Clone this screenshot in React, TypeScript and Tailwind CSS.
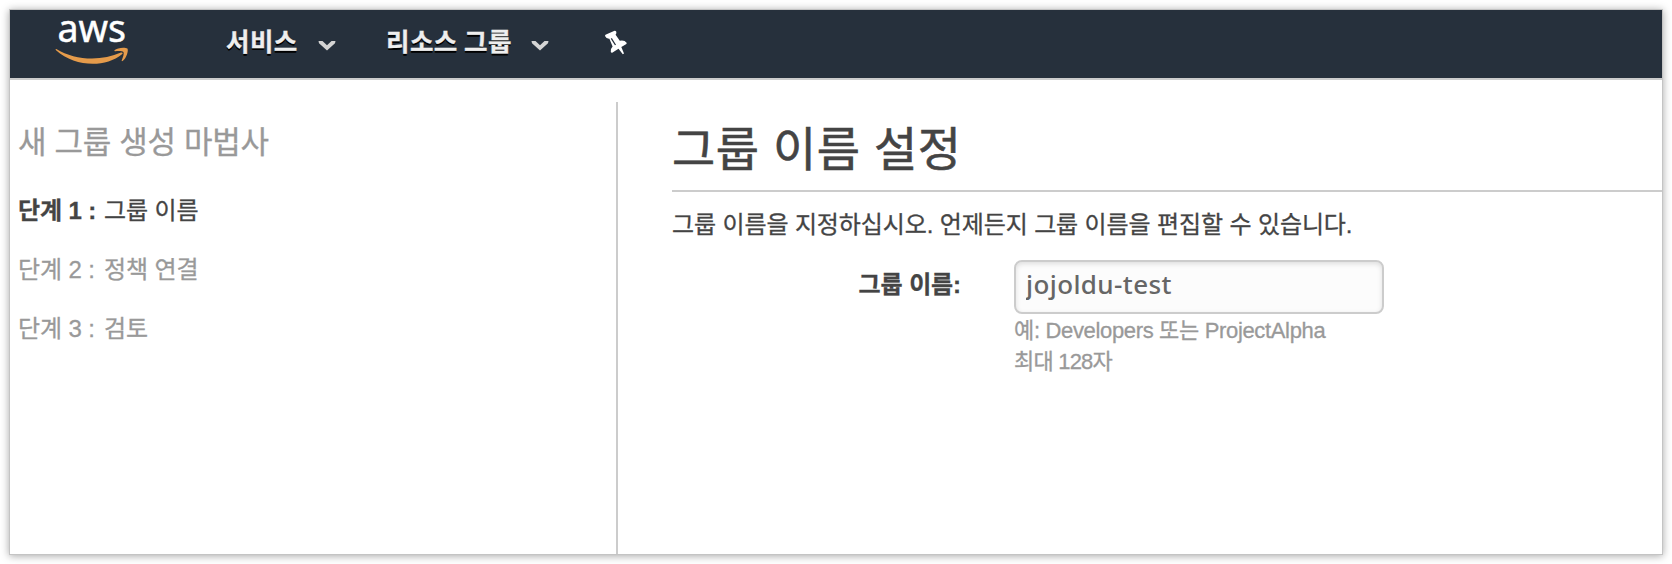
import type { ReactNode } from 'react';

const SANS = "font-['Liberation_Sans','Noto_Sans_CJK_KR',sans-serif]";
const KOREAN = "font-['Noto_Sans_CJK_KR',sans-serif]";

function AwsLogo() {
  return (
    <svg className="block h-[48px] w-[76px] overflow-visible" viewBox="0 0 76 48" role="img" aria-label="aws">
      <text
        x="2.5"
        y="26.3"
        textLength="68.5"
        lengthAdjust="spacingAndGlyphs"
        fontSize="38.5"
        fill="#fff"
        stroke="#fff"
        strokeWidth="0.5"
        className="font-['Noto_Sans',sans-serif]"
      >
        aws
      </text>
      <path d="M1.3 33 C20 44.5 46 45.5 66 36.6 C67.4 36 68.3 37.2 67 38.2 C50 52 20 51 1 34.2 C0.4 33.6 0.6 32.7 1.3 33 Z" fill="#e59b4b" />
      <path d="M59.5 34.3 C62 31.5 70 31 72.4 32.4 C73.8 34.5 71.6 42 67.6 45 C66.9 45.4 66.5 45 66.7 44.4 C68 41.5 69.3 37.5 68.4 36 C67.3 34.7 63.2 34.8 60.2 35.2 C59.4 35.3 59 34.9 59.5 34.3 Z" fill="#e59b4b" />
    </svg>
  );
}

function Caret() {
  return (
    <svg className="block h-[12px] w-[18px]" viewBox="0 0 18 12" aria-hidden="true">
      <path d="M0.500 1 L4.500 1 L9 5.200 L13.500 1 L17.500 1 L17 3.200 L9 10.600 L1 3.200 Z" fill="#d4d4d4" />
    </svg>
  );
}

function Pin() {
  return (
    <svg className="block h-[26px] w-[24px]" viewBox="0 0 24 26" aria-hidden="true">
      <path
        d="M1 6 Q1 5 2 4.600 L10 0.900 Q11.600 0.400 12.300 1.700 Q12.800 3.300 11.600 4.700 L15.800 10.800 Q20.500 9.900 22.600 12.700 Q22.900 13.700 22 14.200 L17.300 16.900 L20 23.500 L18.800 24.300 L14.500 18.700 L8.600 22.600 Q7.300 23.200 6.800 22 Q6.200 19 8.600 16.600 L5.400 8.700 Q2.300 8.900 1 6 Z"
        fill="#fff"
      />
      <path d="M7.300 8.300 L11.500 15" stroke="#26303c" strokeWidth="1.300" />
    </svg>
  );
}

function MenuLabel({ children }: { children: ReactNode }) {
  return (
    <span className={`${KOREAN} text-[25.5px] leading-[36px] font-bold tracking-[0.45px] whitespace-nowrap text-[#eee] [-webkit-text-stroke:0.3px_currentColor] [text-shadow:0_2px_0_#000]`}>
      {children}
    </span>
  );
}

function Step({ label, name, active = false }: { label: string; name: string; active?: boolean }) {
  return (
    <li className={`flex h-[36px] items-center whitespace-nowrap ${active ? 'text-[#444]' : 'text-[#999]'}`}>
      <span className={`w-[86px] ${active ? 'font-bold' : ''}`}>{label}</span>
      <span>{name}</span>
    </li>
  );
}

export default function App() {
  return (
    <div className="h-[564px] w-[1672px] bg-white p-[10px]">
      <div className={`${SANS} flex h-[544px] w-[1652px] flex-col bg-white shadow-[0_0_0_1px_#c4c4c4,0_1px_8px_1px_rgba(0,0,0,0.35)]`}>
        <header className="flex h-[70px] shrink-0 border-b-2 border-[#ccc] bg-[#26303c]">
          <div className="ml-[45px] pt-[6px]">
            <AwsLogo />
          </div>
          <nav className="ml-[95px] flex h-[60px] items-center">
            <span className="flex w-[92px]"><MenuLabel>서비스</MenuLabel></span>
            <span className="mt-[11px]"><Caret /></span>
            <span className="ml-[50px] flex w-[145px]"><MenuLabel>리소스 그룹</MenuLabel></span>
            <span className="mt-[11px]"><Caret /></span>
            <span className="mt-[6px] ml-[55px]"><Pin /></span>
          </nav>
        </header>

        <div className="flex flex-1 pt-[22px]">
          <aside className="w-[606px] shrink-0 pt-[19px] pl-[8px] [-webkit-text-stroke:0.3px_currentColor]">
            <h2 className="h-[44px] text-[31px] leading-[44px] tracking-[-0.3px] whitespace-nowrap text-[#999]">새 그룹 생성 마법사</h2>
            <ol className="mt-[28px] flex flex-col gap-[23px] text-[24px] tracking-[-0.1px]">
              <Step active label="단계 1 :" name="그룹 이름" />
              <Step label="단계 2 :" name="정책 연결" />
              <Step label="단계 3 :" name="검토" />
            </ol>
          </aside>

          <main className="flex-1 border-l-2 border-[#ccc] pl-[54px] [-webkit-text-stroke:0.3px_currentColor]">
            <h1 className="h-[90px] border-b-2 border-[#ccc] pt-[16px] text-[47px] leading-[64px] tracking-[0.5px] whitespace-nowrap text-[#444] [-webkit-text-stroke:0.6px_currentColor]">그룹 이름 설정</h1>
            <p className="mt-[15px] h-[36px] text-[24px] leading-[36px] tracking-[-0.12px] whitespace-nowrap text-[#444]">
              그룹 이름을 지정하십시오. 언제든지 그룹 이름을 편집할 수 있습니다.
            </p>
            <div className="mt-[17px] flex">
              <label htmlFor="group-name" className="w-[289px] pt-[7px] text-right text-[24px] leading-[36px] font-bold tracking-[-0.1px] whitespace-nowrap text-[#444]">
                그룹 이름:
              </label>
              <div className="ml-[53px]">
                <input
                  id="group-name"
                  defaultValue="jojoldu-test"
                  className="block h-[54px] w-[370px] rounded-[8px] border-2 border-[#ccc] bg-[#fcfcfc] px-[10px] pb-[6px] font-['Noto_Sans',sans-serif] text-[26px] font-medium tracking-[0.4px] text-[#666] shadow-[inset_0_2px_5px_rgba(0,0,0,0.12)] outline-none [-webkit-text-stroke:0]"
                />
                <p className="pt-px text-[22px] leading-[31px] tracking-[-0.34px] whitespace-nowrap text-[#999]">예: Developers 또는 ProjectAlpha</p>
                <p className="text-[22px] leading-[32px] tracking-[-0.8px] whitespace-nowrap text-[#999]">최대 128자</p>
              </div>
            </div>
          </main>
        </div>
      </div>
    </div>
  );
}
